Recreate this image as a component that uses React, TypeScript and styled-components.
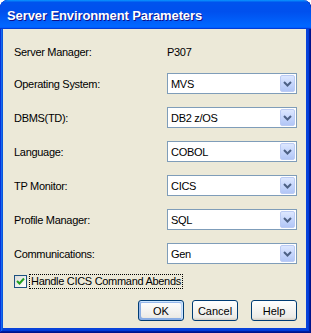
import styled, { createGlobalStyle } from "styled-components";

const GlobalStyle = createGlobalStyle`
  html, body {
    margin: 0;
    padding: 0;
    background: #ffffff;
  }
  * {
    box-sizing: border-box;
  }
`;

const FONT = `"Liberation Sans", Arial, sans-serif`;

const fields = [
  { label: "Operating System:", value: "MVS" },
  { label: "DBMS(TD):", value: "DB2 z/OS" },
  { label: "Language:", value: "COBOL" },
  { label: "TP Monitor:", value: "CICS" },
  { label: "Profile Manager:", value: "SQL" },
  { label: "Communications:", value: "Gen" },
];

export default function App() {
  return (
    <>
      <GlobalStyle />
      <Frame>
        <TitleBar>
          <Title>Server Environment Parameters</Title>
        </TitleBar>
        <Client>
          <Form>
            <StaticRow>
              <Label>Server Manager:</Label>
              <StaticValue>P307</StaticValue>
            </StaticRow>
            {fields.map((f) => (
              <Row key={f.label}>
                <Label>{f.label}</Label>
                <Combo>
                  <ComboText>{f.value}</ComboText>
                  <ComboArrow>
                    <svg width="9" height="6" viewBox="0 0 9 6">
                      <path
                        d="M1 1 L4.5 4.5 L8 1"
                        fill="none"
                        stroke="#4D6185"
                        strokeWidth="2"
                      />
                    </svg>
                  </ComboArrow>
                </Combo>
              </Row>
            ))}
          </Form>
          <CheckRow>
            <CheckBox>
              <svg width="9" height="9" viewBox="0 0 9 9">
                <path
                  d="M1 4 L3.5 6.5 L8 1.5"
                  fill="none"
                  stroke="#21A121"
                  strokeWidth="2"
                />
              </svg>
            </CheckBox>
            <CheckLabel>Handle CICS Command Abends</CheckLabel>
          </CheckRow>
          <ButtonRow>
            <Button $default>OK</Button>
            <Button>Cancel</Button>
            <Button $spaced>Help</Button>
          </ButtonRow>
        </Client>
      </Frame>
    </>
  );
}

const Frame = styled.div`
  width: 311px;
  height: 333px;
  display: flex;
  flex-direction: column;
  background: #0842d9;
  border-radius: 8px 8px 0 0;
  overflow: hidden;
  padding: 0 5px 5px 3px;
  box-shadow: inset -1px -1px #00138c, inset 1px 0 #0831d9,
    inset -2px -2px #001ea0, inset 2px 0 #166aee, inset -3px -3px #003bda,
    inset 3px 0 #0855dd;
`;

const TitleBar = styled.div`
  height: 29px;
  margin: 0 -5px 0 -3px;
  flex: none;
  display: flex;
  align-items: center;
  padding: 2px 0 0 7px;
  border-radius: 8px 8px 0 0;
  background: linear-gradient(
    180deg,
    #0997ff 0%,
    #0053ee 8%,
    #0050ee 40%,
    #0066ff 88%,
    #0066ff 93%,
    #005bff 95%,
    #003dd7 96%,
    #003dd7 100%
  );
`;

const Title = styled.span`
  font-family: ${FONT};
  font-weight: bold;
  font-size: 13px;
  color: #ffffff;
  letter-spacing: -0.1px;
  text-shadow: 1px 1px #0f1089;
`;

const Client = styled.div`
  flex: 1;
  background: #ece9d8;
  padding: 15px 9px 0 11px;
  display: flex;
  flex-direction: column;
  font-family: ${FONT};
  font-size: 11px;
  letter-spacing: -0.3px;
  color: #000000;
`;

const Form = styled.div`
  display: flex;
  flex-direction: column;
  gap: 13px;
`;

const Row = styled.div`
  display: grid;
  grid-template-columns: 153px 130px;
  align-items: center;
  height: 21px;
`;

const StaticRow = styled(Row)`
  height: 16px;
`;

const Label = styled.span`
  white-space: nowrap;
`;

const StaticValue = styled.span``;

const Combo = styled.div`
  height: 21px;
  border: 1px solid #7f9db9;
  background: #ffffff;
  padding: 1px;
  display: flex;
  align-items: center;
`;

const ComboText = styled.span`
  flex: 1;
  padding-left: 2px;
`;

const ComboArrow = styled.div`
  width: 15px;
  height: 17px;
  flex: none;
  display: flex;
  align-items: center;
  justify-content: center;
  border: 1px solid #bbcbf4;
  border-radius: 2px;
  background: linear-gradient(180deg, #dde7fe 0%, #c6d6fc 50%, #b2c6f6 100%);
`;

const CheckRow = styled.div`
  margin-top: 10px;
  display: flex;
  align-items: center;
  height: 15px;
`;

const CheckBox = styled.div`
  width: 13px;
  height: 13px;
  border: 1px solid #1c5180;
  background: linear-gradient(135deg, #dcdcd7 0%, #ffffff 100%);
  display: flex;
  align-items: center;
  justify-content: center;
  margin-right: 2px;
`;

const CheckLabel = styled.span`
  height: 15px;
  line-height: 13px;
  padding: 0 1px;
  border: 1px dotted #000000;
`;

const ButtonRow = styled.div`
  margin-top: 11px;
  display: flex;
  justify-content: flex-end;
  gap: 8px;
`;

const Button = styled.button<{ $default?: boolean; $spaced?: boolean }>`
  width: 46px;
  height: 21px;
  padding: 0;
  margin-left: ${(p) => (p.$spaced ? "5px" : "0")};
  font-family: ${FONT};
  font-size: 11px;
  color: #000000;
  border: 1px solid #003c74;
  border-radius: 3px;
  background: linear-gradient(180deg, #ffffff 0%, #ecebe6 86%, #d6d0c5 100%);
  box-shadow: ${(p) =>
    p.$default
      ? "inset -1px 1px #cee7ff, inset 1px 2px #98b8ea, inset -2px 2px #bcd4f6, inset 1px -1px #89ade4, inset 2px -2px #89ade4"
      : "none"};
`;
